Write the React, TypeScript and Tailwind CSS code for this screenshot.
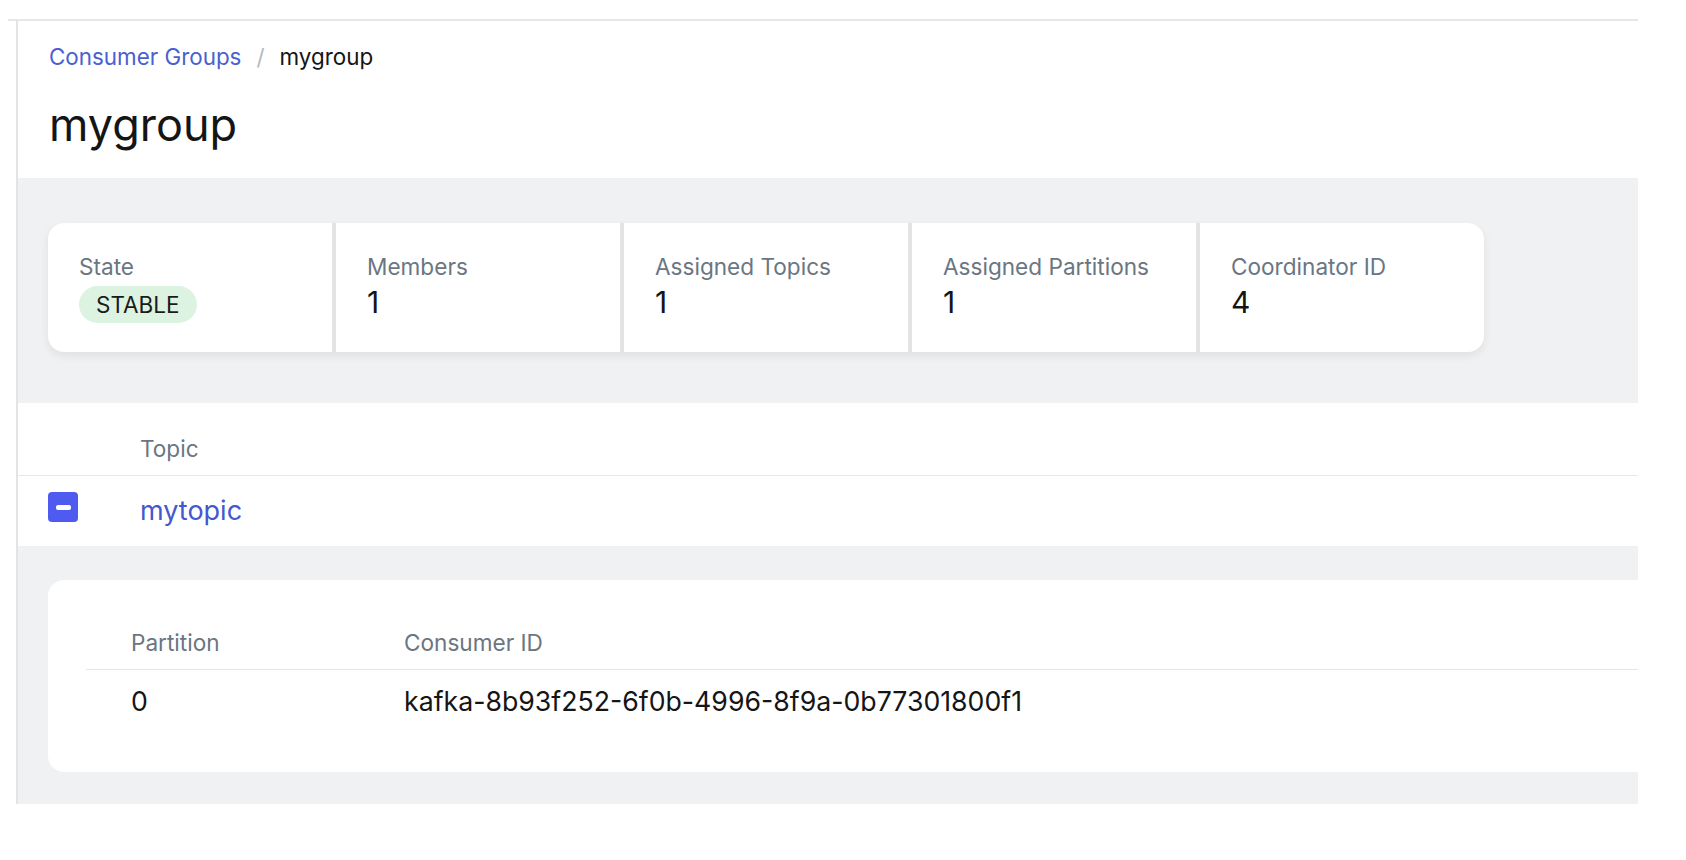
import React from 'react'

const stats = [
  { label: 'Members', value: '1' },
  { label: 'Assigned Topics', value: '1' },
  { label: 'Assigned Partitions', value: '1' },
  { label: 'Coordinator ID', value: '4' },
]

const App: React.FC = () => {
  return (
    <div className="min-h-screen bg-white font-['Inter',sans-serif] text-[#151515]">
      <div className="pt-[19px] pl-[8px]">
        <div className="w-[1630px] border-t-2 border-[#e6e6e6]">
          <div className="ml-[8px] border-l-2 border-[#e4e4e4] overflow-hidden">
            {/* page header */}
            <header className="pl-[31px] pt-[19px] pb-[26px]">
              <nav className="flex items-center text-[22.4px] leading-[33px]">
                <a href="#" className="text-[#4b5fd0]">Consumer Groups</a>
                <span className="mx-[15px] text-[#b4b8bc]">/</span>
                <span className="text-[#151515]">mygroup</span>
              </nav>
              <h1 className="mt-[25px] text-[45px] leading-[54px] font-normal">mygroup</h1>
            </header>

            {/* summary cards */}
            <section className="bg-[#f0f1f3] pl-[30px] pt-[45px] pb-[51px]">
              <div className="flex w-fit gap-[4px] rounded-[16px] bg-[#e2e3e5] overflow-hidden shadow-[0_4px_10px_rgba(0,0,0,0.07)]">
                <div className="w-[284px] bg-white pl-[31px] pt-[27px] pb-[29px]">
                  <div className="text-[22.6px] leading-[33px] text-[#6a7682]">State</div>
                  <span className="mt-[3px] inline-flex h-[37px] items-center rounded-full bg-[#dcf3e2] px-[17px] text-[22.5px] text-[#1b1b1b]">
                    STABLE
                  </span>
                </div>
                {stats.map((s) => (
                  <div key={s.label} className="w-[284px] bg-white pl-[31px] pt-[27px] pb-[29px]">
                    <div className="text-[22.6px] leading-[33px] text-[#6a7682]">{s.label}</div>
                    <div className="text-[30px] leading-[39px]">{s.value}</div>
                  </div>
                ))}
              </div>
            </section>

            {/* topics table */}
            <div className="flex border-b border-[#e6e7e9] pt-[29px] pb-[10px]">
              <div className="w-[122px]" />
              <div className="text-[22.6px] leading-[33px] text-[#6a7682]">Topic</div>
            </div>
            <div className="flex h-[70px]">
              <div className="w-[122px] pl-[30px] pt-[16px]">
                <button className="flex h-[30px] w-[30px] items-center justify-center rounded-[4px] bg-[#4f5af1]">
                  <span className="block h-[5px] w-[15px] rounded-[2px] bg-white" />
                </button>
              </div>
              <a href="#" className="pt-[15px] text-[27px] leading-[40px] text-[#4558cf]">mytopic</a>
            </div>

            {/* expanded row */}
            <section className="bg-[#f0f1f3] pl-[30px] pt-[34px] pb-[32px]">
              <div className="-mr-[30px] rounded-[16px] bg-white pl-[38px] pt-[46px] pb-[51px]">
                <div className="grid grid-cols-[318px_1fr] border-b border-[#e6e7e9] pb-[10px] text-[22.6px] leading-[33px] text-[#6a7682]">
                  <div className="pl-[45px]">Partition</div>
                  <div>Consumer ID</div>
                </div>
                <div className="grid grid-cols-[318px_1fr] pt-[11px] text-[26.7px] leading-[40px]">
                  <div className="pl-[45px]">0</div>
                  <div>kafka-8b93f252-6f0b-4996-8f9a-0b77301800f1</div>
                </div>
              </div>
            </section>
          </div>
        </div>
      </div>
    </div>
  )
}

export default App
